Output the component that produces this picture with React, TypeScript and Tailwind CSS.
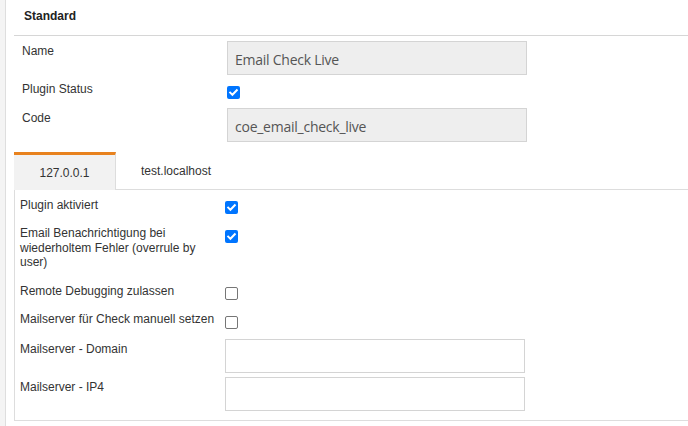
import React from "react";

function Check({ checked, className = "" }: { checked: boolean; className?: string }) {
  if (checked) {
    return (
      <div className={`w-[13px] h-[13px] rounded-[2px] bg-[#0075ff] flex items-center justify-center shrink-0 ${className}`}>
        <svg width="11" height="11" viewBox="0 0 11 11">
          <path d="M2.2 5.6 L4.4 7.8 L8.8 3.2" fill="none" stroke="white" strokeWidth="2" strokeLinecap="square" />
        </svg>
      </div>
    );
  }
  return <div className={`w-[13px] h-[13px] rounded-[2px] border border-[#767676] bg-white shrink-0 ${className}`} />;
}

export default function App() {
  return (
    <div
      className="w-[688px] h-[426px] flex bg-white overflow-hidden text-[12px] text-[#333]"
      style={{ fontFamily: '"Liberation Sans", Arial, sans-serif' }}
    >
      <div className="w-[6px] h-full bg-[#f4f4f4] border-r border-[#dedede] shrink-0" />
      <div className="flex-1 pl-[8px] flex flex-col">
        {/* header */}
        <div className="h-[36px] border-b border-[#d6d6d6] pl-[10px] pt-[9px] font-bold text-[#222] leading-[14px]">
          Standard
        </div>

        {/* Name */}
        <div className="flex items-start mt-[5px] pl-[8px]">
          <div className="w-[205px] pt-[3px] leading-[14px]">Name</div>
          <div
            className="w-[300px] h-[34px] bg-[#eeeeee] border border-[#d4d4d4] pl-[7px] pt-[2px] flex items-center text-[14px] tracking-[-0.25px] text-[#555]"
            style={{ fontFamily: '"Open Sans", sans-serif' }}
          >
            Email Check Live
          </div>
        </div>

        {/* Plugin Status */}
        <div className="flex items-start mt-[7px] pl-[8px]">
          <div className="w-[205px] leading-[14px]">Plugin Status</div>
          <Check checked className="mt-[4px]" />
        </div>

        {/* Code */}
        <div className="flex items-start mt-[9px] pl-[8px]">
          <div className="w-[205px] pt-[3px] leading-[14px]">Code</div>
          <div
            className="w-[300px] h-[34px] bg-[#eeeeee] border border-[#d4d4d4] pl-[7px] pt-[2px] flex items-center text-[14px] tracking-[-0.25px] text-[#555]"
            style={{ fontFamily: '"Open Sans", sans-serif' }}
          >
            coe_email_check_live
          </div>
        </div>

        {/* tabs */}
        <div className="flex mt-[10px] h-[38px]">
          <div className="w-[102px] bg-[#f2f2f2] border-t-[3px] border-[#e8821e] border-r border-r-[#dddddd] flex items-center justify-center leading-[14px]">
            127.0.0.1
          </div>
          <div className="px-[25px] border-b border-[#dddddd] flex items-center leading-[14px]">test.localhost</div>
          <div className="flex-1 border-b border-[#dddddd]" />
        </div>

        {/* tab content */}
        <div className="border-l border-b border-[#dddddd] pl-[5px] pt-[8px] pb-[9px] flex flex-col">
          <div className="flex items-start">
            <div className="w-[205px] leading-[14px]">Plugin aktiviert</div>
            <Check checked className="mt-[3px]" />
          </div>
          <div className="flex items-start mt-[12px]">
            <div className="w-[205px] leading-[14.5px] pr-[4px]">
              Email Benachrichtigung bei wiederholtem Fehler (overrule by user)
            </div>
            <Check checked className="mt-[4px]" />
          </div>
          <div className="flex items-start mt-[14px]">
            <div className="w-[205px] leading-[14px]">Remote Debugging zulassen</div>
            <Check checked={false} className="mt-[3px]" />
          </div>
          <div className="flex items-start mt-[12px]">
            <div className="w-[205px] leading-[14px] whitespace-nowrap">Mailserver für Check manuell setzen</div>
            <Check checked={false} className="mt-[4px]" />
          </div>
          <div className="flex items-start mt-[10px]">
            <div className="w-[205px] pt-[3px] leading-[14px]">Mailserver - Domain</div>
            <div className="w-[300px] h-[34px] bg-white border border-[#d4d4d4]" />
          </div>
          <div className="flex items-start mt-[4px]">
            <div className="w-[205px] pt-[3px] leading-[14px]">Mailserver - IP4</div>
            <div className="w-[300px] h-[34px] bg-white border border-[#d4d4d4]" />
          </div>
        </div>
      </div>
    </div>
  );
}
